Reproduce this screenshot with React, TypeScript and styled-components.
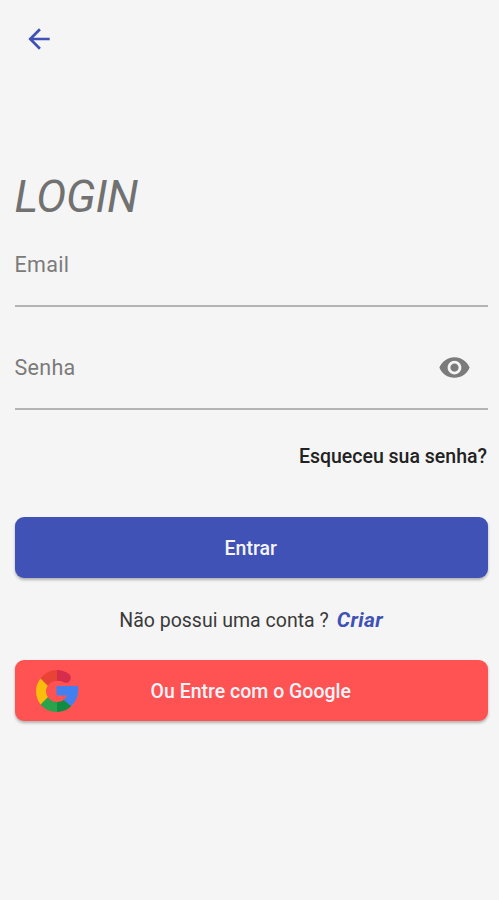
import React from 'react';
import styled, { createGlobalStyle } from 'styled-components';

const GlobalStyle = createGlobalStyle`
  * { box-sizing: border-box; }
  body {
    margin: 0;
    background: #f5f5f5;
    font-family: Roboto, "Liberation Sans", sans-serif;
  }
`;

const Screen = styled.main`
  display: flex;
  flex-direction: column;
  width: 499px;
  height: 900px;
  padding: 0 11px 0 14.5px;
  background: #f5f5f5;
  overflow: hidden;
`;

const TopBar = styled.header`
  display: flex;
  align-items: center;
  height: 77px;
  padding-left: 8px;
  color: #3f51b5;
`;

const IconButton = styled.button`
  display: flex;
  padding: 0;
  border: 0;
  background: none;
  color: inherit;
`;

const Icon = styled.svg<{ $size: number }>`
  display: block;
  width: ${(p) => p.$size}px;
  height: ${(p) => p.$size}px;
  fill: currentColor;
`;

const Title = styled.h1`
  margin: 93px 0 0;
  font-size: 45px;
  line-height: 53px;
  letter-spacing: -0.3px;
  font-weight: 400;
  font-style: italic;
  color: #717171;
`;

const Field = styled.label<{ $gap: number }>`
  display: flex;
  align-items: center;
  justify-content: space-between;
  height: 83px;
  margin-top: ${(p) => p.$gap}px;
  padding-right: 17px;
  border-bottom: 2px solid #b4b4b4;
  color: #7b7b7b;
  font-size: 21.5px;
  line-height: 26px;
  letter-spacing: 0.3px;
`;

const Forgot = styled.a`
  align-self: flex-end;
  margin: 34px 1px 0 0;
  font-size: 19.5px;
  line-height: 26px;
  font-weight: 500;
  color: #222;
`;

const Button = styled.button<{ $color: string }>`
  display: grid;
  grid-template-columns: 64px 1fr 64px;
  align-items: center;
  flex: none;
  height: 61px;
  padding: 0;
  border: 0;
  border-radius: 9px;
  background: ${(p) => p.$color};
  box-shadow: 0 2px 3px rgba(0, 0, 0, 0.28);
  color: #f6f4fb;
  font-family: inherit;
  font-size: 19.5px;
  font-weight: 500;
`;

const ButtonLabel = styled.span`
  grid-column: 2;
  grid-row: 1;
  padding: 2px 1px 0 0;
`;

const Logo = styled.svg`
  grid-column: 1;
  grid-row: 1;
  width: 44px;
  height: 44px;
  margin-left: 20.5px;
`;

const SignUp = styled.p`
  display: flex;
  align-items: baseline;
  justify-content: center;
  gap: 8px;
  height: 26px;
  margin: 29px 0 27px;
  font-size: 19.5px;
  line-height: 26px;
  color: #3a3a3a;
`;

const SignUpLink = styled.a`
  font-size: 21px;
  letter-spacing: 0.4px;
  font-weight: 700;
  font-style: italic;
  color: #3f51b5;
`;

const Actions = styled.section`
  display: flex;
  flex-direction: column;
  margin-top: 47px;
`;

function GoogleLogo() {
  return (
    <Logo viewBox="0 0 44 44" aria-hidden="true">
      <path fill="#e94335" d="M5.5 9.5A21 21 0 0 1 22 1v10.9a10.7 10.7 0 0 0-9.3 4.8z" />
      <path fill="#d62d4c" d="M22 1a21 21 0 0 1 12.6 4.4c3.4 3-.6 9.6-4.6 8.3A13 13 0 0 0 22 11.9z" />
      <path fill="#fcbc0c" d="M5.5 9.5l7.2 7.2a10.7 10.7 0 0 0 .2 11.6L6 36A21 21 0 0 1 5.5 9.5z" />
      <path fill="#2ba24c" d="M12.9 28.3A10.7 10.7 0 0 0 22 33V43A21 21 0 0 1 5.5 35.5z" />
      <path fill="#128c42" d="M22 33c3 0 5-.8 7-2.2l7.5 6.2A21 21 0 0 1 22 43z" />
      <path fill="#4280ef" d="M21.5 17H43c1 7.5-1 15-7 20l-7.8-6.4a8 8 0 0 0 4-4.1H21.5z" />
    </Logo>
  );
}

export default function App() {
  return (
    <>
      <GlobalStyle />
      <Screen>
        <TopBar>
          <IconButton aria-label="Voltar">
            <Icon $size={32} viewBox="0 0 24 24">
              <path d="M20 11H7.83l5.59-5.59L12 4l-8 8 8 8 1.41-1.41L7.83 13H20v-2z" />
            </Icon>
          </IconButton>
        </TopBar>
        <Title>LOGIN</Title>
        <Field $gap={1}>Email</Field>
        <Field $gap={20}>
          Senha
          <Icon $size={33} viewBox="0 0 24 24">
            <path d="M12 4.5C7 4.5 2.73 7.61 1 12c1.73 4.39 6 7.5 11 7.5s9.27-3.11 11-7.5c-1.73-4.39-6-7.5-11-7.5zM12 17c-2.76 0-5-2.24-5-5s2.24-5 5-5 5 2.24 5 5-2.24 5-5 5zm0-8c-1.66 0-3 1.34-3 3s1.34 3 3 3 3-1.34 3-3-1.34-3-3-3z" />
          </Icon>
        </Field>
        <Forgot>Esqueceu sua senha?</Forgot>
        <Actions>
          <Button $color="#4052b5">
            <ButtonLabel>Entrar</ButtonLabel>
          </Button>
          <SignUp>
            Não possui uma conta ?<SignUpLink>Criar</SignUpLink>
          </SignUp>
          <Button $color="#ff5252">
            <GoogleLogo />
            <ButtonLabel>Ou Entre com o Google</ButtonLabel>
          </Button>
        </Actions>
      </Screen>
    </>
  );
}
